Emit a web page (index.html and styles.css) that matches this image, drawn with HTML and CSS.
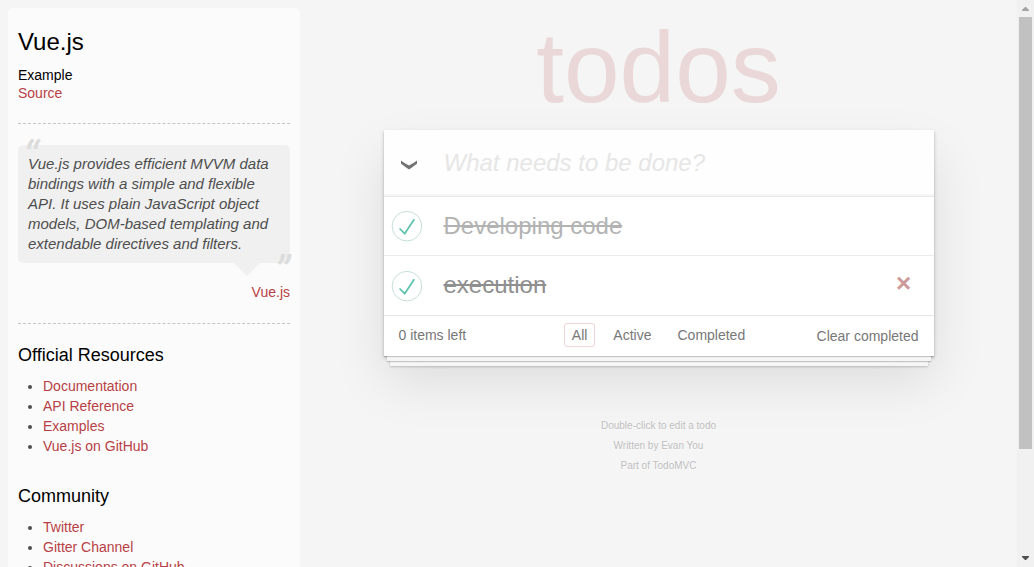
FILE: index.html
```html
<!DOCTYPE html>
<html lang="en">
<head>
<meta charset="utf-8">
<title>Vue.js • TodoMVC</title>
<link rel="stylesheet" href="styles.css">
</head>
<body>
<div class="page">
  <aside class="learn">
    <h3 class="learn-title">Vue.js</h3>
    <h5 class="learn-example">Example</h5>
    <a class="learn-source" href="#">Source</a>
    <hr class="rule">
    <blockquote class="quote">
      <p class="quote-text">Vue.js provides efficient MVVM data bindings with a simple and flexible API. It uses plain JavaScript object models, DOM-based templating and extendable directives and filters.</p>
    </blockquote>
    <a class="quote-author" href="#">Vue.js</a>
    <hr class="rule">
    <h4 class="learn-heading">Official Resources</h4>
    <ul class="links">
      <li><a href="#">Documentation</a></li>
      <li><a href="#">API Reference</a></li>
      <li><a href="#">Examples</a></li>
      <li><a href="#">Vue.js on GitHub</a></li>
    </ul>
    <h4 class="learn-heading">Community</h4>
    <ul class="links">
      <li><a href="#">Twitter</a></li>
      <li><a href="#">Gitter Channel</a></li>
      <li><a href="#">Discussions on GitHub</a></li>
    </ul>
  </aside>

  <main class="main">
    <h1 class="brand">todos</h1>
    <section class="todoapp">
      <div class="entry">
        <label class="toggle-all">
          <input class="native" type="checkbox" checked aria-label="Mark all as complete">
          <svg width="18" height="12" viewBox="0 0 18 12" aria-hidden="true"><path d="M1 1.400Q5.200 4.600 9 6.600Q12.800 4.600 17 1.400V4.800Q12.500 8.200 9 10.600Q5.500 8.200 1 4.800Z" fill="#737373"/></svg>
        </label>
        <input class="new-todo" type="text" placeholder="What needs to be done?" aria-label="New todo">
      </div>
      <ul class="todo-list">
        <li class="todo">
          <input class="native" type="checkbox" id="todo-1" checked>
          <label class="todo-label" for="todo-1">
            <svg class="tick" width="40" height="40" viewBox="-10 -18 100 135" aria-hidden="true"><circle cx="50" cy="50" r="50" fill="none" stroke="#bddad5" stroke-width="3"/><path fill="#5dc2af" d="M72 25L42 71 27 56l-4 4 20 20 34-52z"/></svg>
            <span class="done">Developing code</span>
          </label>
        </li>
        <li class="todo">
          <input class="native" type="checkbox" id="todo-2" checked>
          <label class="todo-label" for="todo-2">
            <svg class="tick" width="40" height="40" viewBox="-10 -18 100 135" aria-hidden="true"><circle cx="50" cy="50" r="50" fill="none" stroke="#bddad5" stroke-width="3"/><path fill="#5dc2af" d="M72 25L42 71 27 56l-4 4 20 20 34-52z"/></svg>
            <span class="done done-fading">execution</span>
          </label>
          <button class="destroy" type="button" aria-label="Delete">×</button>
        </li>
      </ul>
      <footer class="footer">
        <span>0 items left</span>
        <nav class="filters">
          <a class="filter selected" href="#">All</a>
          <a class="filter" href="#">Active</a>
          <a class="filter" href="#">Completed</a>
        </nav>
        <button class="clear" type="button">Clear completed</button>
      </footer>
    </section>
    <footer class="info">
      <p>Double-click to edit a todo</p>
      <p>Written by <a href="#">Evan You</a></p>
      <p>Part of <a href="#">TodoMVC</a></p>
    </footer>
  </main>

  <div class="scrollbar" aria-hidden="true">
    <svg width="17" height="17" viewBox="0 0 17 17"><path d="M5 11V10L8 7H9L12 10V11Z" fill="#a3a3a3"/></svg>
    <div class="thumb"></div>
    <div class="track"></div>
    <svg width="17" height="17" viewBox="0 0 17 17"><path d="M5 6V7L8 10H9L12 7V6Z" fill="#505050"/></svg>
  </div>
</div>
</body>
</html>
```
FILE: styles.css
```css
* {
  box-sizing: border-box;
}

body {
  margin: 0;
  background: #f5f5f5;
  color: #4d4d4d;
  font: 14px/20px "Liberation Sans", Arial, sans-serif;
}

h1, h3, h4, h5, p, ul, blockquote {
  margin: 0;
  padding: 0;
  font-weight: normal;
}

a {
  color: inherit;
  text-decoration: none;
}

button {
  border: 0;
  padding: 0;
  background: none;
  font: inherit;
  color: inherit;
}

.native {
  position: absolute;
  opacity: 0;
  pointer-events: none;
}

.page {
  display: flex;
  height: 100vh;
  overflow: hidden;
}

/* Sidebar */

.learn {
  display: flex;
  flex-direction: column;
  flex: none;
  width: 292px;
  min-height: 600px;
  margin: 8px 0 0 8px;
  padding: 20px 10px;
  border-radius: 5px;
  background: rgba(255, 255, 255, 0.6);
}

.learn-title {
  margin-bottom: 10px;
  color: #000;
  font-size: 24px;
  line-height: 28px;
}

.learn-example {
  color: #000;
  font-size: 14px;
  line-height: 18px;
}

.learn-source {
  align-self: flex-start;
  line-height: 18px;
}

.learn a {
  color: #b83f45;
}

.rule {
  width: 100%;
  margin: 21px 0;
  border: 0;
  border-top: 1px dashed #c5c5c5;
}

.quote {
  position: relative;
  padding: 9px 10px;
  border-radius: 5px;
  background: #f0f0f0;
  font-size: 15px;
  font-style: italic;
}

.quote::before,
.quote::after {
  position: absolute;
  color: #dcdcdc;
  font-family: Roboto, sans-serif;
  font-size: 44px;
  line-height: 50px;
}

.quote::before {
  content: "“";
  top: -13px;
  left: 5px;
}

.quote::after {
  content: "”";
  right: 0;
  bottom: -34px;
}

.quote-text::after {
  content: "";
  position: absolute;
  top: 100%;
  right: 30px;
  border: 13px solid transparent;
  border-top-color: #f0f0f0;
  border-bottom: 0;
}

.quote-author {
  align-self: flex-end;
  margin-top: 19px;
}

.learn-heading {
  color: #000;
  font-size: 18px;
  line-height: 20px;
  margin-bottom: 11px;
}

.links {
  margin-bottom: 30px;
  padding-left: 25px;
}

/* Application */

.main {
  display: flex;
  flex: 1;
  flex-direction: column;
  align-items: center;
  padding-top: 8px;
}

.brand {
  margin-bottom: 4px;
  color: rgba(175, 47, 47, 0.15);
  font-size: 100px;
  line-height: 118px;
}

.todoapp {
  width: 100%;
  max-width: 550px;
  background: #fff;
  box-shadow:
    0 1px 1px rgba(0, 0, 0, 0.2),
    0 8px 0 -3px #f6f6f6,
    0 9px 1px -3px rgba(0, 0, 0, 0.2),
    0 16px 0 -6px #f6f6f6,
    0 17px 2px -6px rgba(0, 0, 0, 0.2),
    0 2px 4px rgba(0, 0, 0, 0.2),
    0 25px 50px rgba(0, 0, 0, 0.1);
}

.entry {
  display: flex;
  align-items: stretch;
  background: rgba(0, 0, 0, 0.003);
  box-shadow: inset 0 -2px 1px rgba(0, 0, 0, 0.03);
}

.toggle-all {
  display: flex;
  align-items: center;
  justify-content: center;
  width: 50px;
  padding-top: 4px;
}

.new-todo {
  flex: 1;
  min-width: 0;
  padding: 19px 10px;
  border: 0;
  background: none;
  color: #4d4d4d;
  font: 24px/28px "Liberation Sans", Arial, sans-serif;
}

.new-todo::placeholder {
  color: #e6e6e6;
  font-style: italic;
  opacity: 1;
}

.todo-list {
  border-top: 1px solid #e6e6e6;
  list-style: none;
}

.todo {
  display: flex;
  height: 59px;
  border-bottom: 1px solid #ededed;
}

.todo:last-child {
  border-bottom: 0;
}

.todo-label {
  display: flex;
  flex: 1;
  gap: 20px;
}

.tick {
  align-self: center;
}

.done {
  align-self: flex-start;
  padding-top: 15px;
  color: #b3b3b3;
  font-size: 24px;
  line-height: 28px;
  text-decoration: line-through;
}

.done-fading {
  color: #8f8f8f;
}

.destroy {
  width: 40px;
  height: 40px;
  margin: 7px 10px 0 0;
  color: #cc9a9a;
  font-size: 26px;
  font-weight: bold;
  line-height: 40px;
}

.footer {
  display: grid;
  grid-template-columns: 1fr auto 1fr;
  align-items: center;
  padding: 7px 15px 9px;
  border-top: 1px solid #e6e6e6;
  color: #777;
}

.filters {
  display: flex;
  gap: 10px;
}

.filter {
  padding: 1px 7px;
  border: 1px solid transparent;
  border-radius: 3px;
}

.filter.selected {
  border-color: rgba(175, 47, 47, 0.2);
}

.clear {
  justify-self: end;
  padding-top: 2px;
}

.info {
  margin-top: 60px;
  color: #bfbfbf;
  font-size: 10px;
  text-align: center;
  text-shadow: 0 1px 0 rgba(255, 255, 255, 0.5);
}

/* Window scrollbar */

.scrollbar {
  display: flex;
  flex: none;
  flex-direction: column;
  width: 17px;
  background: #f1f1f1;
}

.scrollbar svg {
  flex: none;
}

.thumb {
  flex: 81;
  margin: 0 2px;
  background: #c1c1c1;
}

.track {
  flex: 19;
}
```
